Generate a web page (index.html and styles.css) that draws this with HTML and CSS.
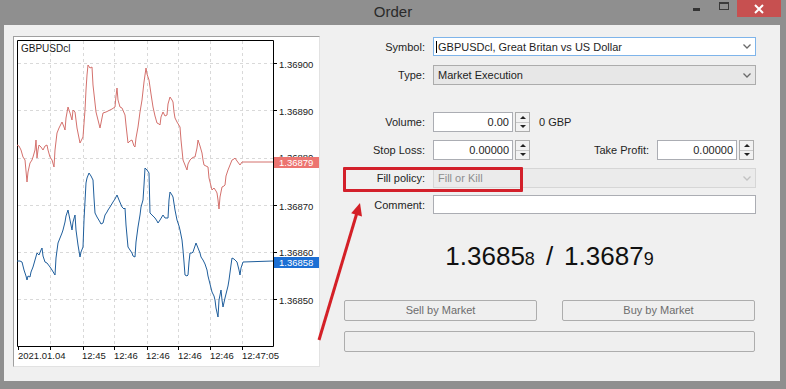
FILE: index.html
```html
<!DOCTYPE html>
<html lang="en">
<head>
  <meta charset="UTF-8" />
  <title>Order</title>
  <link rel="stylesheet" href="styles.css">
</head>
<body>
  <div class="titlebar">
    <span></span>
    <span class="title">Order</span>
    <div class="controls">
      <span class="btn-min"></span>
      <span class="btn-max"></span>
      <span class="btn-close">
        <svg width="10" height="10" viewBox="0 0 10 10"><path d="M1 1 L9 9 M9 1 L1 9" stroke="#fff" stroke-width="2"/></svg>
      </span>
    </div>
  </div>

  <div class="client">
    <div class="chart">
      <svg width="305" height="329" viewBox="14 37 305 329">
        <!-- grid -->
        <g stroke="#d9d9d9" stroke-dasharray="3 3" fill="none">
          <path d="M50.5 41 V346 M83.5 41 V346 M114.5 41 V346 M147.5 41 V346 M178.5 41 V346 M210.5 41 V346 M242.5 41 V346"/>
          <path d="M18 63.5 H273 M18 110.5 H273 M18 158.5 H273 M18 205.5 H273 M18 252.5 H273 M18 299.5 H273"/>
        </g>
        <path d="M17.5 40.5 H273.5 V346.5 H17.5 Z" stroke="#000" fill="none"/>
        <path d="M274 63.5 H277 M274 110.5 H277 M274 158.5 H277 M274 205.5 H277 M274 252.5 H277 M274 299.5 H277 M18.5 347 V350 M50.5 347 V350 M83.5 347 V350 M114.5 347 V350 M147.5 347 V350 M178.5 347 V350 M210.5 347 V350 M242.5 347 V350" stroke="#000"/>

        <!-- ask line -->
        <polyline fill="none" stroke="#d4716d" stroke-width="1"
          points="17,145 19,146 21,150 23,157 25,160 27,182 28,172 30,163 32,160 33,157 35,150 36,140 37,158 38,150 39,145 41,147 43,150 45,146 47,145 48,150 50,157 52,160 54,167 55,150 57,133 59,128 61,124 62,122 64,127 65,130 66,118 68,107 70,113 72,120 73,110 75,112 77,128 79,138 80,143 82,139 83,137 85,110 86,90 87,75 88,65 90,68 92,67 93,85 95,103 96,112 98,120 99,124 100,128 102,118 103,113 106,112 108,111 110,110 112,109 115,107 116,96 117,88 118,100 120,107 122,108 125,115 126,125 128,143 130,141 132,140 134,146 135,147 136,138 138,127 140,112 142,100 144,82 146,68 147,74 149,80 151,94 153,107 155,116 157,123 159,124 160,125 161,117 163,112 165,116 167,115 168,104 170,97 172,100 173,102 174,112 175,118 177,122 180,127 181,140 183,160 185,165 187,170 188,164 190,160 192,158 194,157 195,157 197,148 198,140 200,146 202,153 203,160 204,165 206,166 208,167 209,178 211,186 212,190 214,188 216,191 217,193 218,200 219,209 220,197 222,187 224,186 225,185 226,176 228,170 230,165 232,160 234,159 235,158 237,161 240,165 242,162 273,162"/>
        <!-- bid line -->
        <polyline fill="none" stroke="#1f5e9c" stroke-width="1"
          points="17,261 20,261 22,262 24,270 26,276 27,280 28,276 30,277 31,272 33,267 35,260 37,253 39,255 41,250 42,248 43,256 45,262 47,263 50,267 52,270 55,275 56,258 58,243 60,238 62,233 63,230 65,222 66,216 68,210 70,220 72,230 73,222 75,215 76,230 78,245 80,257 81,252 83,247 84,220 86,183 87,178 89,173 91,176 93,180 94,198 95,213 97,217 100,222 101,224 103,223 105,215 107,212 108,210 110,207 113,202 115,199 117,195 119,200 122,207 124,209 125,208 126,225 128,247 130,250 132,253 133,256 135,257 136,242 138,227 140,215 141,207 143,200 144,185 145,168 147,170 149,173 150,213 152,215 155,218 157,221 158,223 160,220 163,215 165,218 168,218 169,200 170,192 172,195 173,197 175,210 177,220 179,226 180,230 182,240 183,250 184,262 185,275 187,276 188,275 189,262 190,253 192,253 193,252 195,246 196,243 198,248 200,253 201,257 203,260 205,264 207,270 208,276 209,280 211,288 212,292 214,296 215,300 216,308 218,317 219,300 221,290 222,300 223,307 225,298 227,290 228,286 229,280 231,265 232,258 234,259 237,262 239,270 240,275 241,268 243,262 273,261"/>

        <!-- price scale -->
        <g font-family="Liberation Sans, Arial, sans-serif" font-size="9.5" fill="#1a1a1a">
          <text x="279" y="68">1.36900</text>
          <text x="279" y="115">1.36890</text>
          <text x="279" y="161">1.36880</text>
          <text x="279" y="210">1.36870</text>
          <text x="279" y="256">1.36860</text>
          <text x="279" y="304">1.36850</text>
          <text x="18" y="359">2021.01.04</text>
          <text x="82" y="359">12:45</text>
          <text x="114" y="359">12:46</text>
          <text x="146" y="359">12:46</text>
          <text x="178" y="359">12:46</text>
          <text x="210" y="359">12:46</text>
          <text x="242" y="359">12:47:05</text>
          <text x="21" y="52" font-size="10">GBPUSDcl</text>
        </g>
        <rect x="274" y="157" width="45" height="11" fill="#ec7470"/>
        <rect x="274" y="257" width="45" height="11" fill="#1c6fd4"/>
        <g font-family="Liberation Sans, Arial, sans-serif" font-size="9.5" fill="#fff">
          <text x="279" y="166">1.36879</text>
          <text x="279" y="266">1.36858</text>
        </g>
      </svg>
    </div>

    <div class="form">
      <div class="row first">
        <label>Symbol:</label>
        <div class="select focused"><span class="caret"></span>GBPUSDcl, Great Britan vs US Dollar
          <svg class="chevron" width="8" height="5" viewBox="0 0 8 5"><path d="M0.5 0.5 L4 4 L7.5 0.5" stroke="#6a6a6a" stroke-width="1.3" fill="none"/></svg>
        </div>
      </div>
      <div class="row type">
        <label>Type:</label>
        <div class="select combo">Market Execution
          <svg class="chevron" width="8" height="5" viewBox="0 0 8 5"><path d="M0.5 0.5 L4 4 L7.5 0.5" stroke="#6a6a6a" stroke-width="1.3" fill="none"/></svg>
        </div>
      </div>
      <div class="row volume">
        <label>Volume:</label>
        <div class="field">0.00</div>
        <div class="spin"><span class="up"></span><span class="down"></span></div>
        <span class="unit">0 GBP</span>
      </div>
      <div class="row">
        <label>Stop Loss:</label>
        <div class="field">0.00000</div>
        <div class="spin"><span class="up"></span><span class="down"></span></div>
        <label class="tp">Take Profit:</label>
        <div class="field">0.00000</div>
        <div class="spin"><span class="up"></span><span class="down"></span></div>
      </div>
      <div class="row">
        <label>Fill policy:</label>
        <div class="select disabled">Fill or Kill
          <svg class="chevron" width="8" height="5" viewBox="0 0 8 5"><path d="M0.5 0.5 L4 4 L7.5 0.5" stroke="#c2c2c2" stroke-width="1.3" fill="none"/></svg>
        </div>
      </div>
      <div class="row comment">
        <label>Comment:</label>
        <div class="input"></div>
      </div>

      <div class="price">1.3685<span class="small">8</span><span class="sep">/</span>1.3687<span class="small">9</span></div>

      <div class="actions">
        <div class="btn">Sell by Market</div>
        <div class="btn">Buy by Market</div>
      </div>
      <div class="btn bar"></div>

      <div class="highlight"></div>
    </div>
  </div>

  <svg class="arrow" width="786" height="389" viewBox="0 0 786 389">
    <line x1="319" y1="340" x2="356.6" y2="214" stroke="#d42027" stroke-width="3"/>
    <polygon points="360,203 362,216.5 351.2,213.3" fill="#d42027"/>
  </svg>
</body>
</html>
```

FILE: styles.css
```css
body {
  margin: 0;
  width: 786px;
  height: 389px;
  overflow: hidden;
  position: relative;
  background-color: #8f8f8f;
  font-family: "Liberation Sans", Arial, sans-serif;
  font-size: 11px;
  color: #1e1e1e;
}
.titlebar {
  display: grid;
  grid-template-columns: 1fr auto 1fr;
  height: 25px;
}
.title {
  font-size: 15px;
  line-height: 23px;
  color: #2a2a2a;
}
.controls {
  justify-self: end;
  display: flex;
  align-items: flex-start;
}
.btn-min {
  width: 7px;
  height: 3px;
  margin: 8px 19px 0 0;
  background-color: #333;
}
.btn-max {
  box-sizing: border-box;
  width: 10px;
  height: 8px;
  margin: 2px 8px 0 0;
  border: 1px solid #3a3a3a;
  border-top-width: 2px;
}
.btn-close {
  display: flex;
  align-items: center;
  justify-content: center;
  width: 44px;
  height: 17px;
  margin-right: 5px;
  background-color: #c75050;
}
.client {
  display: flex;
  box-sizing: border-box;
  width: 776px;
  height: 356px;
  margin-left: 4px;
  padding: 11px 0 0 9px;
  background-color: #f0f0f0;
}
.chart {
  box-sizing: border-box;
  width: 307px;
  height: 331px;
  border: 1px solid;
  border-color: #a0a0a0 #e2e2e2 #e2e2e2 #a0a0a0;
  background-color: #fff;
}
.chart svg {
  display: block;
}
.form {
  position: relative;
  width: 413px;
  margin: 1px 0 0 23px;
}
.row {
  display: flex;
  align-items: center;
  height: 20px;
  margin-top: 8px;
}
.row.first {
  height: 19px;
  margin-top: 0;
}
.row.type {
  margin-top: 9px;
}
.row.volume {
  margin-top: 27px;
}
.row.comment {
  height: 19px;
  margin-top: 7px;
}
.row label {
  box-sizing: border-box;
  width: 90px;
  padding-right: 8px;
  text-align: right;
}
.row label.tp {
  width: auto;
  margin-left: auto;
}
.select {
  flex: 1;
  display: flex;
  align-items: center;
  box-sizing: border-box;
  height: 100%;
  padding-left: 4px;
  border: 1px solid #acacac;
}
.select.focused {
  background-color: #fff;
  border-color: #7eb4ea;
}
.select.combo {
  background-color: #e7e7e7;
}
.select.disabled {
  background-color: #ebebeb;
  border-color: #d6d6d6;
  color: #8e8e8e;
}
.caret {
  width: 1px;
  height: 12px;
  margin-right: 1px;
  margin-left: -2px;
  background-color: #000;
}
.chevron {
  margin-left: auto;
  margin-right: 4px;
}
.field {
  box-sizing: border-box;
  width: 80px;
  height: 100%;
  padding-right: 3px;
  line-height: 18px;
  text-align: right;
  background-color: #fff;
  border: 1px solid #abadb3;
}
.input {
  flex: 1;
  box-sizing: border-box;
  height: 100%;
  background-color: #fff;
  border: 1px solid #abadb3;
}
.spin {
  display: flex;
  flex-direction: column;
  box-sizing: border-box;
  width: 15px;
  height: 100%;
  margin: 0 2px;
  border: 1px solid #acacac;
  background-color: #f2f2f2;
}
.spin span {
  flex: 1;
  display: flex;
  align-items: center;
  justify-content: center;
}
.spin .up {
  border-bottom: 1px solid #c8c8c8;
}
.spin .up::after {
  content: "";
  border: 3px solid transparent;
  border-bottom: 3px solid #222;
  border-top: 0;
}
.spin .down::after {
  content: "";
  border: 3px solid transparent;
  border-top: 3px solid #222;
  border-bottom: 0;
}
.unit {
  margin-left: 7px;
}
.price {
  margin-top: 27px;
  height: 30px;
  line-height: 30px;
  text-align: center;
  font-size: 26px;
  color: #111;
}
.price .small {
  font-size: 18px;
}
.price .sep {
  padding: 0 11px;
}
.actions {
  display: grid;
  grid-template-columns: 1fr 1fr;
  gap: 25px;
  margin: 29px 1px 0;
}
.btn {
  box-sizing: border-box;
  height: 21px;
  line-height: 19px;
  text-align: center;
  color: #6d6d6d;
  background-color: #efefef;
  border: 1px solid #adadad;
  border-radius: 2px;
}
.btn.bar {
  margin: 10px 1px 0;
}
.highlight {
  position: absolute;
  left: 0;
  top: 130px;
  box-sizing: border-box;
  width: 180px;
  height: 25px;
  border: 3px solid #d3202b;
  border-radius: 1px;
}
.arrow {
  position: absolute;
  left: 0;
  top: 0;
  pointer-events: none;
}
```
